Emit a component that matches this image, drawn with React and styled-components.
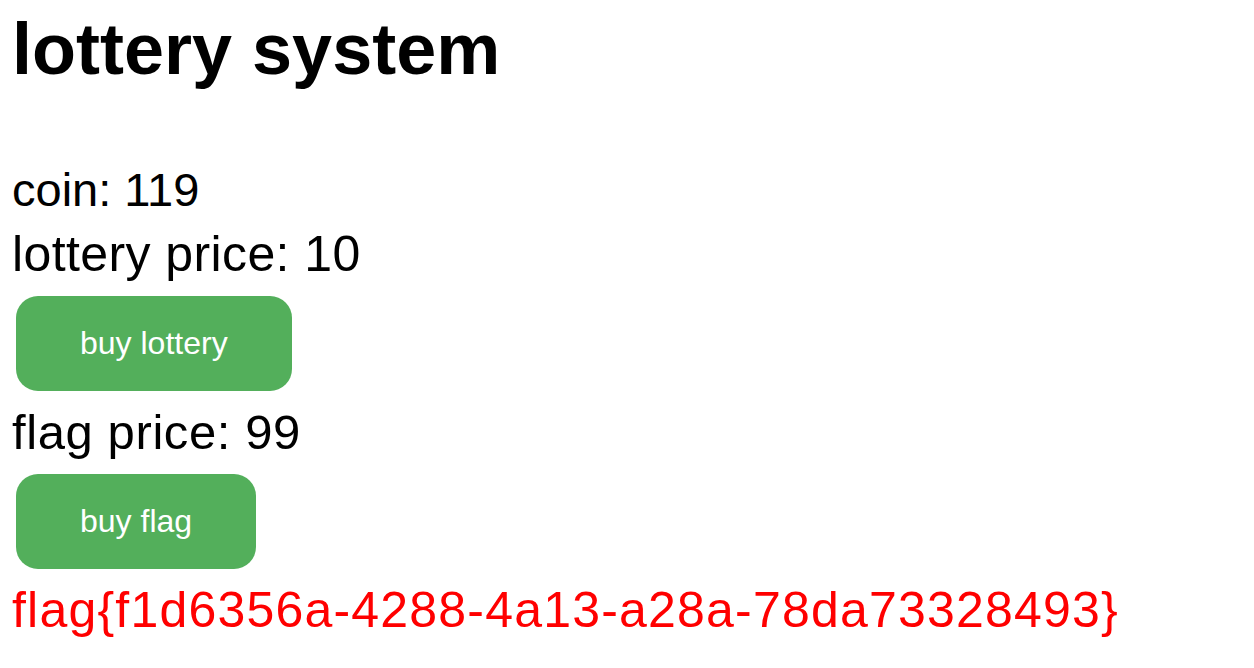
import React, { useState } from "react";
import styled, { createGlobalStyle } from "styled-components";

const GlobalStyle = createGlobalStyle`
  body {
    margin: 0;
    background: #ffffff;
    font-family: "Liberation Sans", Arial, sans-serif;
  }
`;

const Page = styled.div`
  padding: 0 16px;
`;

const Title = styled.h1`
  margin: 3px 0 63px -4px;
  font-size: 72px;
  line-height: 92px;
  font-weight: 700;
  color: #000;
`;

const Line = styled.div`
  margin-left: -4px;
  font-size: ${({ size }) => size || "49px"};
  line-height: 64px;
  color: ${({ color }) => color || "#000"};
  letter-spacing: ${({ spacing }) => spacing || "normal"};
`;

const BuyButton = styled.button`
  display: block;
  margin: 10px 0 9px;
  height: 95px;
  padding: 0 64px;
  border: none;
  border-radius: 22px;
  background: #53af5b;
  color: #fff;
  font-family: "Liberation Sans", Arial, sans-serif;
  font-size: 32px;
  cursor: pointer;
`;

const App = () => {
  const [coin] = useState(119);

  return (
    <Page>
      <GlobalStyle />
      <Title>lottery system</Title>
      <Line size="47px">coin: {coin}</Line>
      <Line size="50px" spacing="0.4px">lottery price: 10</Line>
      <BuyButton type="button">buy lottery</BuyButton>
      <Line spacing="0.6px">flag price: 99</Line>
      <BuyButton type="button">buy flag</BuyButton>
      <Line color="#ff0000" size="50px" spacing="1.2px">
        flag{"{"}f1d6356a-4288-4a13-a28a-78da73328493{"}"}
      </Line>
    </Page>
  );
};

export default App;
